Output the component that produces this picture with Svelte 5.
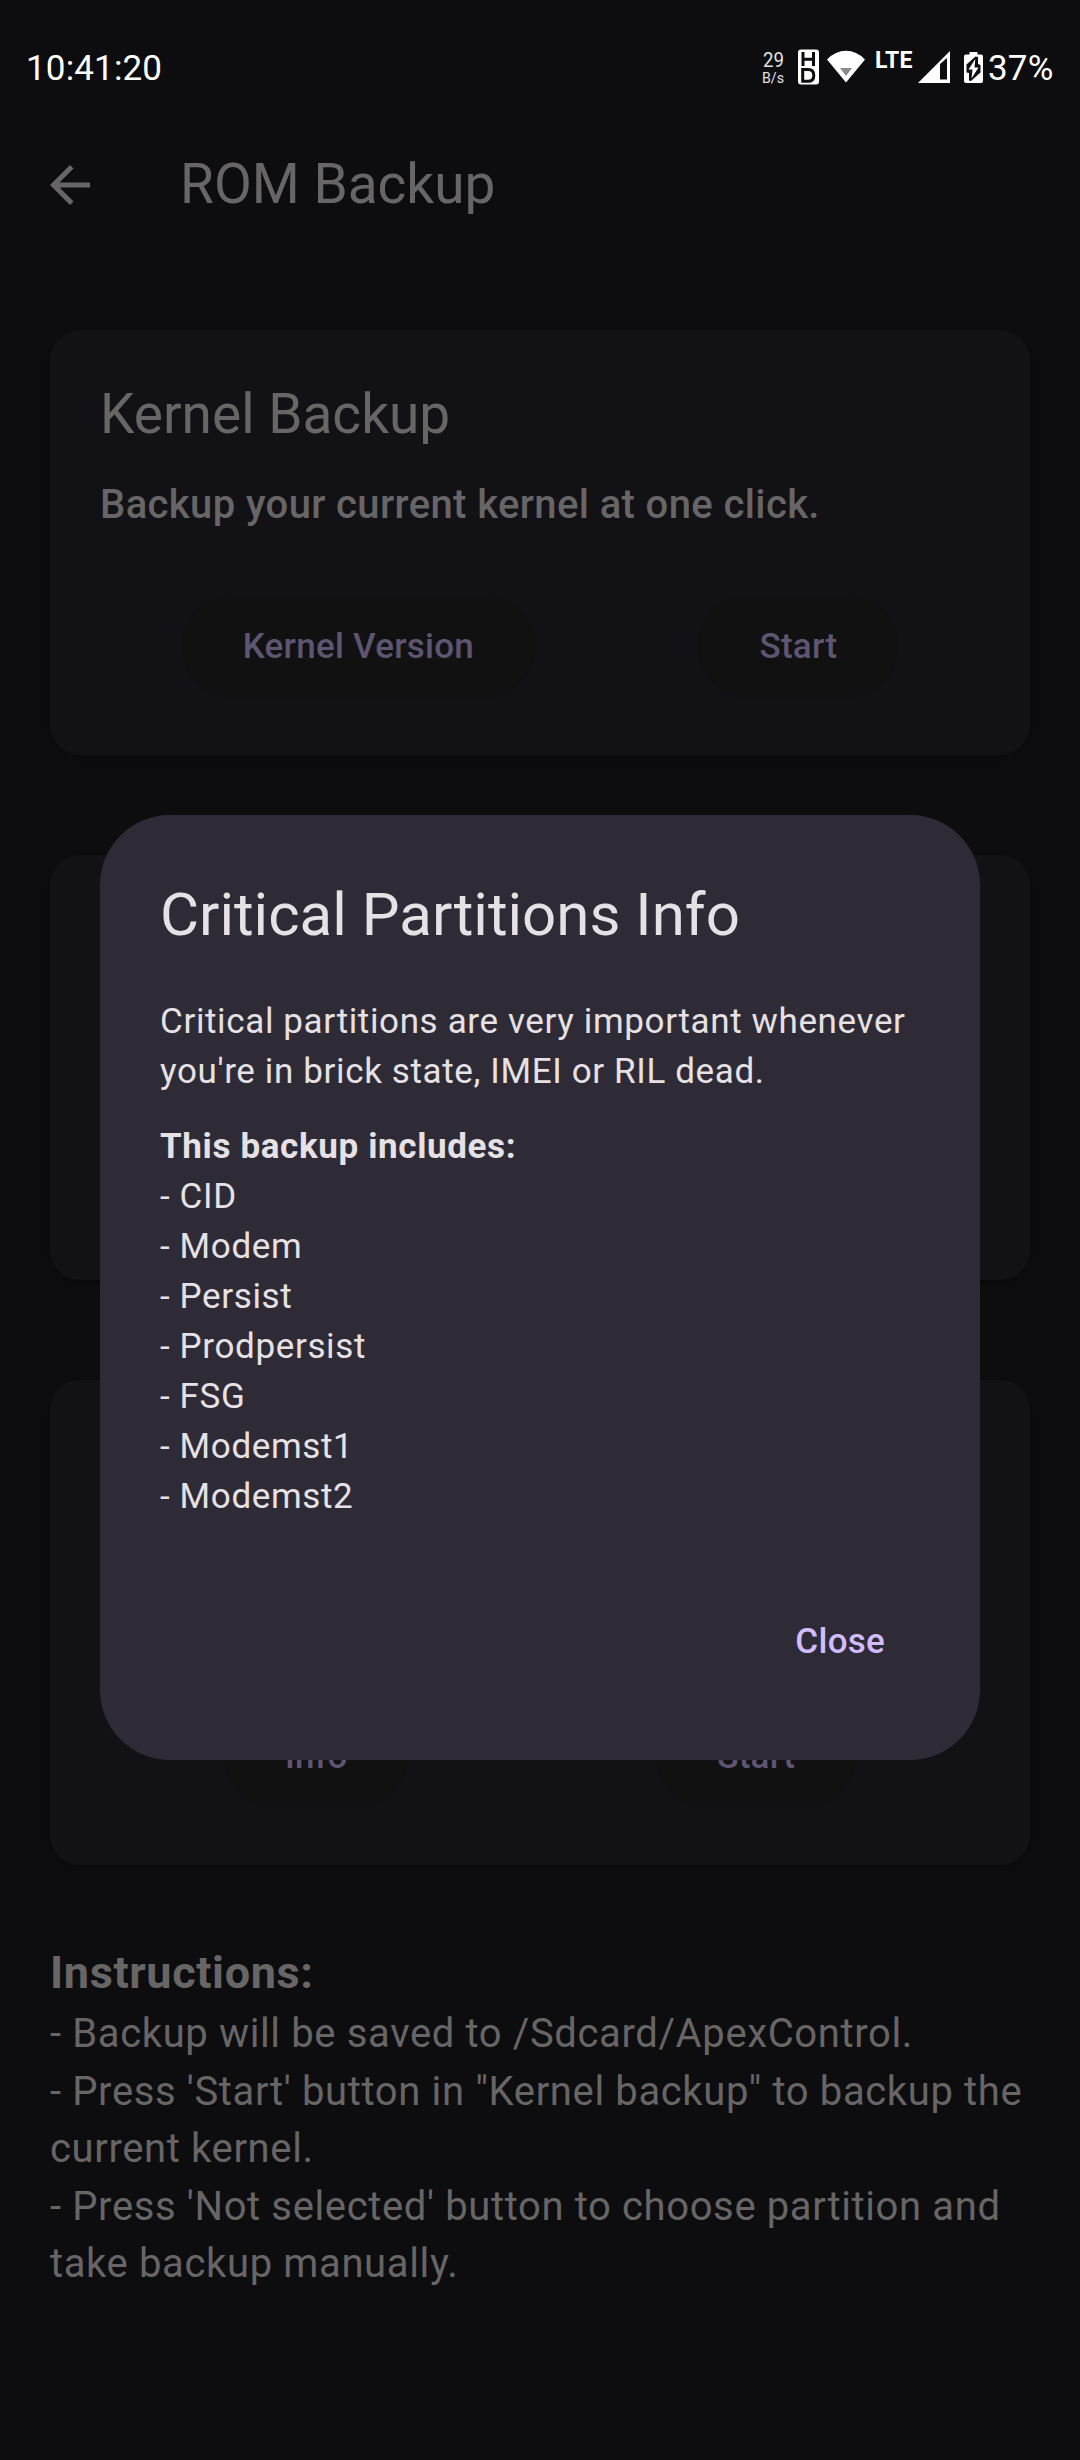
<script>
  const partitions = ['CID', 'Modem', 'Persist', 'Prodpersist', 'FSG', 'Modemst1', 'Modemst2'];
  const instructions = [
    '- Backup will be saved to /Sdcard/ApexControl.',
    `- Press 'Start' button in "Kernel backup" to backup the current kernel.`,
    "- Press 'Not selected' button to choose partition and take backup manually."
  ];
</script>

<div class="screen">
  <header class="status">
    <span class="time">10:41:20</span>
    <div class="indicators">
      <svg class="speed" width="24" height="40" viewBox="0 0 24 40">
        <text x="1" y="18.500" font-size="19.500" textLength="21" lengthAdjust="spacingAndGlyphs">29</text>
        <text x="0" y="34.500" font-size="14" textLength="22" lengthAdjust="spacingAndGlyphs">B/s</text>
      </svg>
      <svg class="hd" width="21" height="40" viewBox="0 0 21 40">
        <rect x="0" y="1.500" width="21" height="35" rx="3" fill="#fff" />
        <g fill="none" stroke="#0d0d0f" stroke-width="3">
          <path d="M5 4V18M15.500 4V18M5 11.300H15.500" />
          <path d="M4.700 21.500H10Q15.800 21.500 15.800 27.400T10 33.300H4.700Z" />
        </g>
      </svg>
      <svg class="wifi" width="38" height="40" viewBox="0 0 38 40">
        <path d="M0 11.500Q8.500 2.800 19 2.800T38 11.500L19 34.500Z" fill="#fff" />
        <path d="M13 20H25L19 28Z" fill="#8a8a8b" />
      </svg>
      <svg class="lte" width="41" height="40" viewBox="0 0 41 40">
        <text x="1" y="19.500" font-size="23" font-weight="700" textLength="37.500" lengthAdjust="spacing">LTE</text>
      </svg>
      <svg class="signal" width="32" height="40" viewBox="0 0 32 40">
        <path d="M0 35L32 3V35Z" fill="#fff" />
        <path d="M22 16L29 10V31.500H22Z" fill="#0d0d0f" />
      </svg>
      <svg class="battery" width="19" height="40" viewBox="0 0 19 40">
        <path d="M5.500 4H13.500V6.500H17Q19 6.500 19 8.500V33Q19 35 17 35H2Q0 35 0 33V8.500Q0 6.500 2 6.500H5.500Z" fill="#fff" />
        <path d="M11.500 8.500L2.500 16.500V24.500L5 25V32.500L7 33L16.500 24.500V17L14 16V9Z" fill="#0d0d0f" />
        <path d="M11.300 11L4.500 21.500H8.500L7.500 30.500L14.500 19.500H10.500Z" fill="#fff" />
      </svg>
      <span class="percent">37%</span>
    </div>
  </header>

  <div class="appbar">
    <svg class="back" width="60" height="60" viewBox="0 0 24 24">
      <path d="M20 11H7.830l5.590-5.590L12 4l-8 8 8 8 1.410-1.410L7.830 13H20z" />
    </svg>
    <h1>ROM Backup</h1>
  </div>

  <main>
    <section class="card">
      <h2>Kernel Backup</h2>
      <p>Backup your current kernel at one click.</p>
      <div class="actions">
        <button>Kernel Version</button>
        <button>Start</button>
      </div>
    </section>
    <section class="card"></section>
    <section class="card tall">
      <div class="actions">
        <button>Info</button>
        <button>Start</button>
      </div>
    </section>
    <section class="instructions">
      <h3>Instructions:</h3>
      {#each instructions as line}
        <p>{line}</p>
      {/each}
    </section>
  </main>

  <div class="overlay">
    <div class="dialog" role="dialog" aria-modal="true">
      <h2>Critical Partitions Info</h2>
      <p>Critical partitions are very important whenever you're in brick state, IMEI or RIL dead.</p>
      <div class="list">
        <strong>This backup includes:</strong>
        {#each partitions as name}
          <span>- {name}</span>
        {/each}
      </div>
      <button class="close">Close</button>
    </div>
  </div>
</div>

<style>
  :global(body) {
    background: #0d0d0f;
  }
  .screen {
    position: relative;
    width: 1080px;
    height: 2460px;
    overflow: hidden;
    background: #0d0d0f;
    color: #676566;
    font-family: Roboto, sans-serif;
  }
  h1, h2, h3, p {
    margin: 0;
    font-weight: 400;
  }
  button {
    border: 0;
    font: 500 35px/50px Roboto, sans-serif;
    letter-spacing: 0.25px;
    white-space: nowrap;
  }
  .status {
    display: flex;
    align-items: center;
    justify-content: space-between;
    height: 135px;
    padding: 0 26px 0 26px;
    box-sizing: border-box;
    color: #fff;
    font-size: 35px;
  }
  .time {
    padding-top: 1px;
    letter-spacing: 0.150px;
  }
  .indicators {
    display: flex;
    align-items: center;
  }
  .indicators svg {
    overflow: visible;
  }
  .indicators text {
    fill: #fff;
  }
  .speed { margin-right: 12px; }
  .indicators .speed text { fill: #e2e2e2; }
  .hd { margin-right: 8px; }
  .wifi { margin-right: 9px; }
  .lte { margin-right: 3px; }
  .signal { margin-right: 14px; }
  .battery { margin-right: 5px; }
  .percent {
    width: 66px;
    padding-top: 1px;
    letter-spacing: 0.200px;
  }
  .appbar {
    display: flex;
    align-items: center;
    gap: 80px;
    height: 100px;
    padding: 0 40px;
  }
  .back {
    fill: #676566;
  }
  h1 {
    padding-bottom: 2px;
    font-size: 55px;
    line-height: 70px;
  }
  main {
    display: flex;
    flex-direction: column;
    gap: 100px;
    padding: 95px 50px 0;
  }
  .card {
    display: flex;
    flex-direction: column;
    height: 425px;
    padding: 49px 50px 60px;
    box-sizing: border-box;
    border-radius: 30px;
    background: #121116;
    box-shadow: 0 3px 8px rgba(0, 0, 0, 0.3);
  }
  .card.tall {
    height: 485px;
  }
  .card h2 {
    font-size: 55px;
    line-height: 70px;
  }
  .card p {
    margin-top: 26px;
    font-size: 40px;
    font-weight: 500;
    line-height: 60px;
    letter-spacing: 0.38px;
  }
  .actions {
    display: flex;
    justify-content: space-around;
    margin-top: auto;
  }
  .actions button {
    height: 100px;
    padding: 4px 60px 0;
    border-radius: 50px;
    background: #111112;
    box-shadow: 0 2px 3px rgba(0, 0, 0, 0.08);
    color: #5e5573;
  }
  .instructions {
    margin-top: -24px;
    font-size: 40px;
    line-height: 57.500px;
    letter-spacing: 0.630px;
  }
  .instructions h3 {
    font-size: 45px;
    font-weight: 700;
    line-height: 64px;
    padding-bottom: 0.400px;
    letter-spacing: 0.630px;
  }
  .overlay {
    position: absolute;
    inset: 0;
    display: flex;
    align-items: flex-start;
    justify-content: center;
    padding-top: 815px;
  }
  .dialog {
    display: flex;
    flex-direction: column;
    width: 880px;
    height: 945px;
    padding: 60px;
    box-sizing: border-box;
    border-radius: 70px;
    background: #2f2b36;
    color: #e6e1e5;
    font-size: 35px;
    line-height: 50px;
    letter-spacing: 0.630px;
  }
  .dialog h2 {
    margin-bottom: 42px;
    font-size: 60px;
    line-height: 80px;
    letter-spacing: 0;
  }
  .list {
    display: flex;
    flex-direction: column;
    margin-top: 25px;
  }
  .list strong {
    font-weight: 700;
  }
  .close {
    align-self: flex-end;
    height: 100px;
    margin-top: 70px;
    padding: 0 35px;
    background: none;
    color: #d0bcff;
  }
</style>
